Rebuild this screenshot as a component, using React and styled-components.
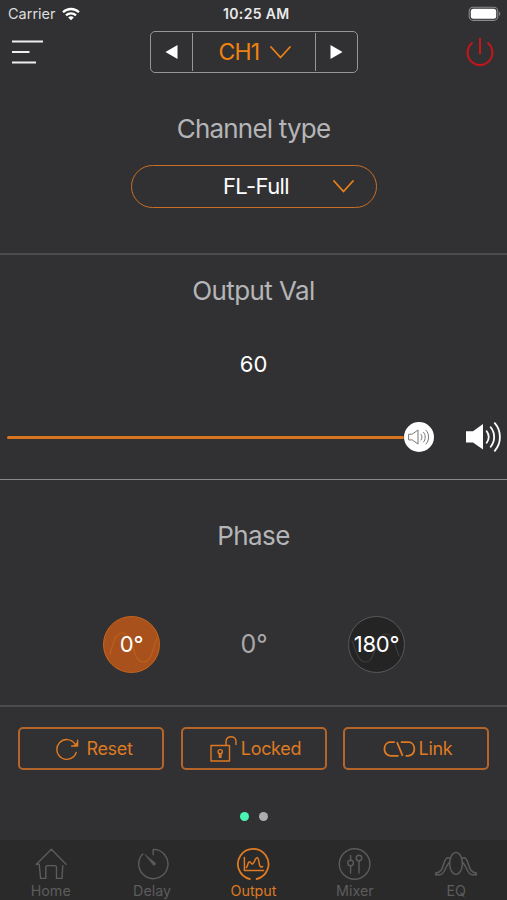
import React from 'react';
import styled, { createGlobalStyle } from 'styled-components';

const ORANGE = '#df7a22';

const GlobalStyle = createGlobalStyle`
  * { box-sizing: border-box; }
  body { margin: 0; background: #313133; }
  button { font: inherit; color: inherit; background: none; border: 0; padding: 0; margin: 0; }
  svg { display: block; flex: none; }
`;

const Screen = styled.div`
  width: 507px;
  height: 900px;
  display: flex;
  flex-direction: column;
  overflow: hidden;
  background: #313133;
  color: #fff;
  font-family: Inter, "Liberation Sans", sans-serif;
`;

const Label = styled.span`
  font-size: ${(p) => p.$size}px;
  font-weight: ${(p) => p.$weight || 400};
  letter-spacing: ${(p) => p.$track || 0}px;
  color: ${(p) => p.$color || 'inherit'};
  white-space: nowrap;
`;

const StatusBar = styled.div`
  height: 28px;
  padding: 0 6px 0 8px;
  display: grid;
  grid-template-columns: 215px 1fr auto;
  align-items: center;
  line-height: 18px;
`;

const StatusSide = styled.div`
  display: flex;
  align-items: center;
  gap: 6px;
`;

const Header = styled.header`
  height: 49px;
  padding: 3px 13px 0 12px;
  display: grid;
  grid-template-columns: 138px 208px 1fr;
`;

const IconButton = styled.button`
  height: 42px;
  display: flex;
  align-items: center;
  justify-self: ${(p) => (p.$end ? 'end' : 'start')};
`;

const ChannelPicker = styled.div`
  height: 42px;
  border: 1.5px solid #969698;
  border-radius: 5px;
  display: grid;
  grid-template-columns: 41px 1fr 41px;
`;

const StepButton = styled.button`
  display: flex;
  align-items: center;
  justify-content: center;
`;

const ChannelName = styled.button`
  margin: 1px 0;
  border: solid #969698;
  border-width: 0 1.5px;
  display: flex;
  align-items: center;
  justify-content: center;
  gap: 11px;
  padding-left: 2px;
  color: #ef8310;
`;

const Section = styled.section`
  height: ${(p) => p.$height}px;
  padding-top: ${(p) => p.$top}px;
  border-bottom: ${(p) => p.$line} solid ${(p) => p.$lineColor};
  display: flex;
  flex-direction: column;
  align-items: center;
`;

const Heading = styled.h2`
  margin: 0;
  font-size: 26px;
  line-height: 32px;
  font-weight: 400;
  letter-spacing: ${(p) => p.$track}px;
  color: #b5b5b7;
`;

const TypeSelect = styled.button`
  width: 246px;
  height: 43px;
  margin-top: 20px;
  border: 1.5px solid #c96e25;
  border-radius: 22px;
  display: grid;
  grid-template-columns: 1fr 21px;
  align-items: center;
  line-height: 26px;
  padding: 0 22px 1px 48px;
`;

const Value = styled.div`
  margin-top: 43px;
  height: 28px;
  display: flex;
  align-items: center;
`;

const VolumeRow = styled.div`
  align-self: stretch;
  margin-top: 43px;
  padding: 0 6px 0 7px;
  height: 32px;
  display: flex;
  align-items: center;
  justify-content: space-between;
`;

const Slider = styled.div`
  width: 427px;
  display: flex;
  align-items: center;
`;

const Track = styled.div`
  flex: 1;
  height: 3px;
  border-radius: 2px;
  background: #d9751e;
`;

const Thumb = styled.div`
  width: 30px;
  height: 30px;
  border-radius: 50%;
  background: #fff;
  display: flex;
  align-items: center;
  justify-content: center;
`;

const PhaseRow = styled.div`
  align-self: stretch;
  margin-top: 63px;
  padding: 0 102px 0 103px;
  height: 58px;
  display: flex;
  align-items: center;
  justify-content: space-between;
`;

const PhaseButton = styled.button`
  width: 57px;
  height: 57px;
  border-radius: 50%;
  border: 1.5px solid ${(p) => (p.$active ? '#c9661a' : '#58585a')};
  background: ${(p) => (p.$active ? '#a9511c' : '#242425')};
  display: grid;
  place-items: center;
  > * { grid-area: 1 / 1; }
`;

const Actions = styled.div`
  display: grid;
  grid-template-columns: repeat(3, 146px);
  justify-content: space-between;
  padding: 20px 18px 0;
`;

const ActionButton = styled.button`
  height: 43px;
  border: 2px solid #b56529;
  border-radius: 5px;
  color: ${ORANGE};
  display: flex;
  align-items: center;
  justify-content: center;
  gap: ${(p) => p.$gap}px;
  padding-left: ${(p) => p.$shift || 0}px;
`;

const Pager = styled.div`
  flex: 1;
  display: flex;
  align-items: flex-start;
  justify-content: center;
  gap: 10px;
  padding-top: 42px;
`;

const Dot = styled.span`
  width: 9px;
  height: 9px;
  border-radius: 50%;
  background: ${(p) => (p.$active ? '#48f6b1' : '#acacae')};
`;

const TabBar = styled.nav`
  height: 60px;
  background: #2a2a2a;
  display: grid;
  grid-template-columns: repeat(5, 1fr);
`;

const Tab = styled.button`
  display: flex;
  flex-direction: column;
  align-items: center;
  justify-content: flex-start;
  padding-top: 7px;
  gap: 2px;
  line-height: 16px;
  color: ${(p) => (p.$active ? ORANGE : '#5c5c5d')};
`;

const Stroke = ({ w, h, sw = 1.4, children, ...rest }) => (
  <svg width={w} height={h} viewBox={`0 0 ${w} ${h}`} fill="none" stroke="currentColor"
    strokeWidth={sw} strokeLinecap="round" strokeLinejoin="round" {...rest}>
    {children}
  </svg>
);

const WifiIcon = () => (
  <Stroke w={18} h={14} sw={2.3} strokeLinecap="butt">
    <path d="M1 5.2C5.4.9 12.6.9 17 5.2M4 8.3C6.8 5.6 11.2 5.6 14 8.3" />
    <path d="M6.2 10.4C7.8 8.9 10.2 8.9 11.8 10.4L9 13.2Z" fill="currentColor" stroke="none" />
  </Stroke>
);

const BatteryIcon = () => (
  <svg width="33" height="16" viewBox="0 0 33 16">
    <rect x="1.2" y="1.2" width="28.6" height="13.2" rx="4" fill="none" stroke="#8c8c8e" strokeWidth="1.1" />
    <rect x="2.8" y="2.8" width="25.4" height="10" rx="2.5" fill="#fff" />
    <path d="M31.2 5.7C32.7 6.4 32.7 9.2 31.2 9.9Z" fill="#8c8c8e" />
  </svg>
);

const MenuIcon = () => (
  <Stroke w={32} h={28} sw={2.2} strokeLinecap="butt">
    <path d="M0 3.5H31M0 14H17.5M0 24.5H24" stroke="#eee" />
  </Stroke>
);

const PowerIcon = () => (
  <Stroke w={28} h={30} sw={2}>
    <g stroke="#c9141c">
      <path d="M6 6.1A12.4 12.4 0 1 0 22 6.1M14 1.8V16.6" />
    </g>
  </Stroke>
);

const Chevron = ({ w, h }) => (
  <Stroke w={w} h={h} sw={1.8}>
    <path d={`M1 1L${w / 2} ${h - 1.5}L${w - 1} 1`} stroke="#ec8115" />
  </Stroke>
);

const ArrowIcon = ({ dir }) => (
  <svg width="13" height="14" viewBox="0 0 13 14">
    <path d={dir === 'left' ? 'M12.5 0V14L.5 7Z' : 'M.5 0V14L12.5 7Z'} fill="#fff" />
  </svg>
);

const SpeakerIcon = () => (
  <svg width="35" height="30" viewBox="0 0 35 30" fill="none" stroke="#fff" strokeWidth="1.8" strokeLinecap="round">
    <path d="M0 9.3H7L17 2V27.5L7 20.5H0Z" fill="#fff" stroke="none" />
    <path d="M20.7 9.3C23.2 12.8 23.2 17.2 20.7 20.7M24.7 5.2C29.3 11 29.3 19 24.7 24.8M28.8 1.2C35.6 9 35.6 21 28.8 28.8" />
  </svg>
);

const ThumbSpeaker = () => (
  <Stroke w={22} h={16} sw={1}>
    <g stroke="#777">
      <path d="M1 5.2H4.2L10 1V15L4.2 10.9H1ZM13 5.3C14.3 7 14.3 9.3 13 11M15.6 3.3C17.8 6 17.8 10.3 15.6 13M18 1.2C21.5 5 21.5 11.2 18 15" />
    </g>
  </Stroke>
);

const Wave = ({ inverted }) => (
  <Stroke w={54} h={54} sw={1.2}>
    {inverted
      ? <path d="M3 24C7 32 8 45 17 45C27 45 26 17 37 17C45 17 46 30 50 39" stroke="#3d3d3e" />
      : <path d="M5 37C8 29 9 16 17 16C29 16 27 45 38 45C47 45 48 31 52 21" stroke="#bb601d" />}
  </Stroke>
);

const ResetIcon = () => (
  <Stroke w={24} h={24}>
    <path d="M19.9 6.8A9.9 9.9 0 1 0 21.2 15.5M22.6 3.2V9H16.6" />
    <path d="M22.6 4.6V9H18.2L20 7Z" fill="currentColor" stroke="none" />
  </Stroke>
);

const LockIcon = () => (
  <Stroke w={27} h={27}>
    <path d="M1 10.5H19.5V26H1ZM16 10.2V6.5C16 .1 26 .1 26 6.5V9.6" />
    <circle cx="10.2" cy="16.7" r="2.1" />
    <path d="M9.4 18.5V22.3H11V18.5" />
  </Stroke>
);

const LinkIcon = () => (
  <Stroke w={34} h={16} sw={1.8} strokeLinecap="butt">
    <path d="M11.8 1.2H7.6C-.6 1.2-.6 14.8 7.6 14.8H15.6M14 1.2L19.6 14.8M17.8 1.2H25.2C33.4 1.2 33.4 14.8 25.2 14.8H22.6" />
  </Stroke>
);

const HomeIcon = () => (
  <Stroke w={34} h={34}>
    <path d="M5.2 17.2H2.3L17.4 2.2L32 17.2M5.2 17.2L6.6 31.4H11.8V20.5Q11.8 18.6 13.7 18.6H20.6Q22.5 18.6 22.5 20.5V31.4H28L28.8 18.6" />
  </Stroke>
);

const DelayIcon = () => (
  <Stroke w={34} h={34}>
    <path d="M7.8 6.9A14.6 14.6 0 1 0 18.2 2.4V7.8" />
    <path d="M10.2 7.7L20.4 16.1Q21.2 18.3 18.7 18.3Z" fill="currentColor" strokeWidth=".6" />
  </Stroke>
);

const OutputIcon = () => (
  <Stroke w={34} h={34} sw={1.8}>
    <path d="M13.8 32A15.3 15.3 0 1 1 20.6 32" />
    <path d="M8.4 10.6V23.6H27.6M10.3 20.6C12 19.6 11.4 15.6 13.3 14.8C15 14.2 15 17.8 16.6 17C19 15.8 18.8 10.6 21.2 10.4C23.2 10.6 22.7 18.6 24.4 19.7Q25.2 20.3 26.6 19.5" strokeWidth="1.5" />
  </Stroke>
);

const MixerIcon = () => (
  <Stroke w={34} h={34}>
    <circle cx="16.6" cy="17" r="15.3" />
    <circle cx="12.6" cy="16" r="2.8" />
    <circle cx="21" cy="11" r="2.8" />
    <path d="M12.6 8.5V13.2M12.6 18.8V26M21 13.8V26" />
  </Stroke>
);

const EqIcon = () => (
  <Stroke w={44} h={34}>
    <ellipse cx="22" cy="16.4" rx="6.4" ry="11" />
    <path d="M16.6 11.2C12 9.6 10.9 12.8 9.6 17.2C8 22.6 6.6 25.8 1.6 26V27.8H5.6C11 27.8 11.4 18 15.7 15.4" />
    <path d="M27.4 11.2C32 9.6 33.1 12.8 34.4 17.2C36 22.6 37.4 25.8 42.4 26V27.8H38.4C33 27.8 32.6 18 28.3 15.4" />
  </Stroke>
);

const TABS = [
  { name: 'Home', Icon: HomeIcon },
  { name: 'Delay', Icon: DelayIcon },
  { name: 'Output', Icon: OutputIcon, active: true },
  { name: 'Mixer', Icon: MixerIcon },
  { name: 'EQ', Icon: EqIcon },
];

export default function App() {
  return (
    <Screen>
      <GlobalStyle />
      <StatusBar>
        <StatusSide>
          <Label $size={14.5} $color="#ddd">Carrier</Label>
          <WifiIcon />
        </StatusSide>
        <Label $size={14} $weight={600} $track={0.35} $color="#e9e9e9">10:25 AM</Label>
        <BatteryIcon />
      </StatusBar>
      <Header>
        <IconButton aria-label="Menu"><MenuIcon /></IconButton>
        <ChannelPicker>
          <StepButton aria-label="Previous channel"><ArrowIcon dir="left" /></StepButton>
          <ChannelName>
            <Label $size={23} $track={-0.8}>CH1</Label>
            <Chevron w={21} h={13} />
          </ChannelName>
          <StepButton aria-label="Next channel"><ArrowIcon dir="right" /></StepButton>
        </ChannelPicker>
        <IconButton $end aria-label="Power"><PowerIcon /></IconButton>
      </Header>
      <Section $height={178} $top={36} $line="2px" $lineColor="#4c4c4e">
        <Heading $track={-0.8}>Channel type</Heading>
        <TypeSelect>
          <Label $size={22} $track={-0.6}>FL-Full</Label>
          <Chevron w={21} h={13} />
        </TypeSelect>
      </Section>
      <Section $height={225} $top={20} $line="1px" $lineColor="#8a8a8c">
        <Heading $track={-0.6}>Output Val</Heading>
        <Value><Label $size={22}>60</Label></Value>
        <VolumeRow>
          <Slider>
            <Track />
            <Thumb><ThumbSpeaker /></Thumb>
          </Slider>
          <SpeakerIcon />
        </VolumeRow>
      </Section>
      <Section $height={227} $top={40} $line="2px" $lineColor="#4c4c4e">
        <Heading $track={-0.6}>Phase</Heading>
        <PhaseRow>
          <PhaseButton $active><Wave /><Label $size={22} $track={-0.3}>0°</Label></PhaseButton>
          <Label $size={25} $color="#a9a9ab">0°</Label>
          <PhaseButton><Wave inverted /><Label $size={22} $track={-0.3}>180°</Label></PhaseButton>
        </PhaseRow>
      </Section>
      <Actions>
        <ActionButton $gap={7} $shift={6}><ResetIcon /><Label $size={18} $track={-0.3}>Reset</Label></ActionButton>
        <ActionButton $gap={4} $shift={4}><LockIcon /><Label $size={18} $track={-0.3}>Locked</Label></ActionButton>
        <ActionButton $gap={2} $shift={3}><LinkIcon /><Label $size={18} $track={-0.3}>Link</Label></ActionButton>
      </Actions>
      <Pager><Dot $active /><Dot /></Pager>
      <TabBar>
        {TABS.map(({ name, Icon, active }) => (
          <Tab key={name} $active={active}>
            <Icon />
            <Label $size={14.3}>{name}</Label>
          </Tab>
        ))}
      </TabBar>
    </Screen>
  );
}
